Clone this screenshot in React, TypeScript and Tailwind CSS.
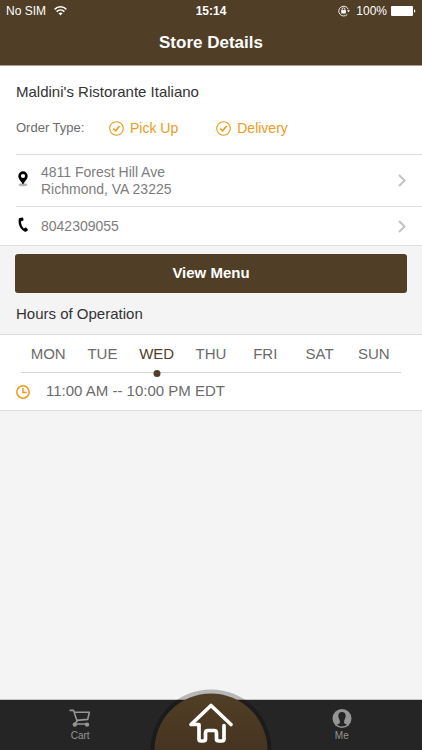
import React from "react";

const days = ["MON", "TUE", "WED", "THU", "FRI", "SAT", "SUN"];

function StatusBar() {
  return (
    <div className="grid grid-cols-3 items-center h-[22px] px-[6px] text-xs">
      <div className="flex items-center gap-2">
        <span>No SIM</span>
        <svg width="13" height="10" viewBox="0 0 13 10" fill="none" stroke="currentColor" strokeWidth="1.5">
          <path d="M0.6 3.4C4 0 9 0 12.4 3.4" />
          <path d="M2.6 5.6C4.8 3.5 8.2 3.5 10.4 5.6" />
          <path d="M6.5 9.6L4.4 7.3C5.6 6.2 7.4 6.2 8.6 7.3Z" fill="currentColor" stroke="none" />
        </svg>
      </div>
      <span className="text-center font-bold">15:14</span>
      <div className="flex items-center justify-end gap-[6px]">
        <svg width="12" height="12" viewBox="0 0 12 12" fill="none" stroke="currentColor">
          <path d="M10.2 4.2A4.9 4.9 0 1 0 9.3 9.4" strokeWidth="0.9" />
          <path d="M8.9 5.2H12L10.5 7.3Z" fill="currentColor" stroke="none" />
          <rect x="3.2" y="5.1" width="4.6" height="3.4" fill="currentColor" stroke="none" />
          <path d="M4.1 5.4V4.2a1.4 1.4 0 0 1 2.8 0v1.2" strokeWidth="0.9" />
        </svg>
        <div className="flex items-center gap-1">
          <span>100%</span>
          <svg width="25" height="10" viewBox="0 0 25 10" fill="currentColor">
            <rect width="22" height="10" rx="1" />
            <path d="M23 3.3c1.8 0.4 1.8 3 0 3.4Z" />
          </svg>
        </div>
      </div>
    </div>
  );
}

function OrderType({ label }: { label: string }) {
  return (
    <span className="flex items-center gap-[6px] text-sm text-[#eb9c1c]">
      <svg width="15" height="15" viewBox="0 0 15 15" fill="none" stroke="currentColor">
        <circle cx="7.5" cy="7.5" r="6.8" strokeWidth="1.1" />
        <path d="M4.3 7.6L6.6 9.8L10.6 5" strokeWidth="1.6" />
      </svg>
      {label}
    </span>
  );
}

function Chevron() {
  return (
    <svg className="shrink-0" width="8" height="13" viewBox="0 0 8 13" fill="none" stroke="#c3c3c3" strokeWidth="2">
      <path d="M1 1L6.6 6.5L1 12" />
    </svg>
  );
}

export default function App() {
  return (
    <div className="min-h-screen flex flex-col bg-[#f4f4f4] text-[#333] font-['Liberation_Sans',Arial,sans-serif]">
      <header className="bg-[#503e27] text-white border-b border-[#a99f92]">
        <StatusBar />
        <h1 className="h-[43px] leading-[42px] text-center text-[17px] font-bold">Store Details</h1>
      </header>

      <main className="flex-1">
        <section className="bg-white border-b border-[#dcdcdc]">
          <div className="pl-4 py-4">
            <h2 className="text-[15px] leading-5">Maldini's Ristorante Italiano</h2>
            <div className="flex items-center mt-4 h-5">
              <span className="w-[93px] text-[13px] text-[#6b6b6b]">Order Type:</span>
              <div className="flex gap-[38px]">
                <OrderType label="Pick Up" />
                <OrderType label="Delivery" />
              </div>
            </div>
          </div>
          <a href="#map" className="flex items-center ml-4 pr-4 h-[52px] border-t border-[#dcdcdc]">
            <svg className="shrink-0 mr-[10px]" width="15" height="20" viewBox="0 0 15 20">
              <ellipse cx="7" cy="13.8" rx="4.2" ry="1.5" fill="#b5b5b5" />
              <path
                fillRule="evenodd"
                d="M7 0.3a4.7 4.7 0 0 1 4.7 4.7C11.7 8 8.6 10.2 7 13.6C5.4 10.2 2.3 8 2.3 5A4.7 4.7 0 0 1 7 0.3ZM7 2.9a2.1 2.1 0 1 0 0 4.2a2.1 2.1 0 0 0 0-4.2Z"
                fill="#000"
              />
            </svg>
            <span className="flex-1 text-sm leading-[17px] text-[#7d7d7d]">
              4811 Forest Hill Ave
              <br />
              Richmond, VA 23225
            </span>
            <Chevron />
          </a>
          <a href="tel:8042309055" className="flex items-center ml-4 pr-4 h-[39px] border-t border-[#dcdcdc]">
            <svg className="shrink-0 mr-[10px]" width="15" height="18" viewBox="0 0 15 18">
              <path
                d="M3.7 1L6.4 0.4Q7.1 0.3 7.2 1L7.5 2.9Q7.5 3.5 6.9 3.7L5 4.3C4.9 7 5.9 9.6 7.9 11.6L9.5 10.6Q10 10.3 10.4 10.8L11.8 12.6Q12.2 13.1 11.7 13.6L10.2 14.6Q9.4 15 8.5 14.5C4.2 11.9 2 7.4 2.7 2.4Q2.8 1.3 3.7 1Z"
                fill="#000"
              />
            </svg>
            <span className="flex-1 text-sm text-[#7d7d7d]">8042309055</span>
            <Chevron />
          </a>
        </section>

        <div className="px-[15px] pt-2">
          <button type="button" className="w-full h-[39px] rounded-[3px] bg-[#503e27] text-white text-[15px] font-bold">
            View Menu
          </button>
        </div>
        <h2 className="px-4 h-[41px] leading-[42px] text-[15px]">Hours of Operation</h2>

        <section className="bg-white border-y border-[#dcdcdc]">
          <div className="mx-[21px] grid grid-cols-7 h-[38px] border-b border-[#d4d4d4] text-[15px] leading-[38px] text-[#6b6b6b]">
            {days.map((day) =>
              day === "WED" ? (
                <button key={day} type="button" className="relative text-[#503e27]">
                  {day}
                  <span className="absolute -bottom-1 left-1/2 -translate-x-1/2 size-[7px] rounded-full bg-[#503e27]" />
                </button>
              ) : (
                <button key={day} type="button">
                  {day}
                </button>
              )
            )}
          </div>
          <div className="flex items-center gap-4 px-4 h-[37px] text-[15px] text-[#6b6b6b]">
            <svg width="14" height="14" viewBox="0 0 14 14" fill="none" stroke="#eb9c1c" strokeWidth="1.5">
              <circle cx="7" cy="7" r="6.2" />
              <path d="M6.9 2.9V7.4H10.6" />
            </svg>
            <span>11:00 AM -- 10:00 PM EDT</span>
          </div>
        </section>
      </main>

      <nav className="relative flex justify-between h-[51px] border-t border-[#c4c4c4] bg-[#252525] text-[10px] leading-3 text-[#959595]">
        <a href="#cart" className="w-[38%] flex flex-col items-center gap-px pt-[9px]">
          <svg width="22" height="20" viewBox="0 0 22 20" fill="none" stroke="currentColor" strokeWidth="1.6" strokeLinejoin="round">
            <path d="M0.5 1.4H4.6L8.2 12.6" />
            <path d="M5.2 3.2H20.4L18.7 10.4L7.5 11.4" />
            <path d="M8.2 12.2L5 15H19" />
            <circle cx="5.8" cy="15.6" r="1.4" fill="currentColor" />
            <circle cx="18" cy="15.6" r="1.4" fill="currentColor" />
          </svg>
          Cart
        </a>
        <a href="#home" aria-label="Home" className="absolute bottom-0 left-1/2 -translate-x-1/2">
          <svg width="122" height="61" viewBox="0 0 122 61">
            <defs>
              <linearGradient id="homeFill" x1="0" y1="0" x2="0" y2="1">
                <stop offset="0" stopColor="#513e25" />
                <stop offset="0.5" stopColor="#453421" />
              </linearGradient>
            </defs>
            <circle cx="61" cy="61" r="60.5" fill="#000" fillOpacity="0.25" />
            <circle cx="61" cy="61" r="56.5" fill="url(#homeFill)" />
            <path
              d="M81 35.5L61 16.5L41 35.500H49V50Q49 52 51 52H53Q55.5 52 55.5 50V44Q55.5 41.500 58 41.500H64Q66.500 41.500 66.500 44V50Q66.500 52 69 52H71.500Q74 52 74 50V36.500"
              fill="none"
              stroke="#fff"
              strokeWidth="3.7"
              strokeLinecap="round"
              strokeLinejoin="round"
            />
          </svg>
        </a>
        <a href="#me" className="w-[38%] flex flex-col items-center gap-px pt-[9px]">
          <svg width="20" height="20" viewBox="0 0 20 20">
            <circle cx="10" cy="9.5" r="9.5" fill="currentColor" />
            <path
              d="M10 2.9C12.5 2.9 13.7 4.500 13.6 6.700C13.9 7 13.7 8.4 13.2 8.8C12.9 10.2 12.4 11.1 12.1 11.7V13.7C12.5 15 14.5 15.3 15.3 15.8Q10 19.1 4.700 15.8C5.5 15.3 7.500 15 7.9 13.7V11.7C7.6 11.1 7.1 10.2 6.8 8.8C6.3 8.4 6.1 7 6.4 6.700C6.3 4.500 7.500 2.900 10 2.900Z"
              fill="#252525"
            />
          </svg>
          Me
        </a>
      </nav>
    </div>
  );
}
